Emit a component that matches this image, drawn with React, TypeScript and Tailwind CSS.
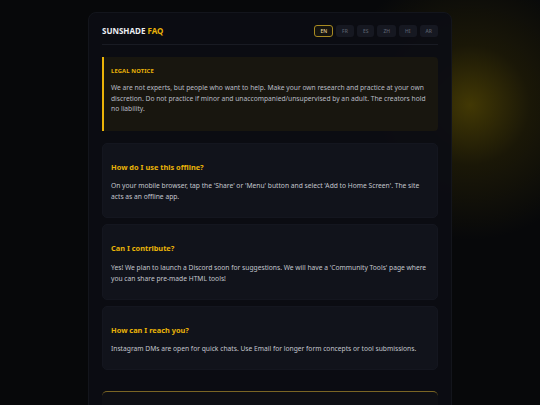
const langs = ["EN", "FR", "ES", "ZH", "HI", "AR"];

const faqs = [
  {
    q: "How do I use this offline?",
    a: "On your mobile browser, tap the 'Share' or 'Menu' button and select 'Add to Home Screen'. The site acts as an offline app.",
  },
  {
    q: "Can I contribute?",
    a: "Yes! We plan to launch a Discord soon for suggestions. We will have a 'Community Tools' page where you can share pre-made HTML tools!",
  },
  {
    q: "How can I reach you?",
    a: "Instagram DMs are open for quick chats. Use Email for longer form concepts or tool submissions.",
  },
];

export default function App() {
  return (
    <div className="h-[405px] overflow-hidden bg-[#07080a] bg-[radial-gradient(circle_at_470px_105px,rgba(105,88,0,0.6),rgba(70,58,0,0.3)_60px,transparent_135px)] pt-[12px] font-['Noto_Sans',sans-serif]">
      <div className="mx-auto w-[364px] rounded-t-[8px] border border-[#13151c] bg-[#0c0d13]/95 px-[13px] pt-[12px] pb-[20px]">
        {/* Header */}
        <div className="flex items-center justify-between border-b border-[#191b23] pb-[7px]">
          <h1 className="text-[8px] font-bold leading-[12px] text-[#eceef2]">
            SUNSHADE <span className="text-[#eab308]">FAQ</span>
          </h1>
          <div className="flex gap-[3px]">
            {langs.map((l) => {
              const active = l === "EN";
              return (
                <button
                  key={l}
                  className={`flex h-[12px] items-center justify-center rounded-[3px] px-[5px] text-[5px] font-medium leading-none ${
                    active
                      ? "border border-[#a88a22] bg-[#15140f] text-[#e8d9a0]"
                      : "border border-transparent bg-[#161821] text-[#5c616d]"
                  }`}
                >
                  {l}
                </button>
              );
            })}
          </div>
        </div>

        {/* Legal notice */}
        <div className="mt-[12px] rounded-r-[4px] border-l-2 border-[#eab308] bg-[#18160f] pt-[10px] pr-[6px] pb-[16px] pl-[7px]">
          <div className="text-[5.85px] font-bold leading-[8px] tracking-[0.02em] text-[#eab308]">
            LEGAL NOTICE
          </div>
          <p className="mt-[8px] text-[6.7px] leading-[10.5px] text-[#b9bcc4]">
            We are not experts, but people who want to help. Make your own research and practice at your
            own discretion. Do not practice if minor and unaccompanied/unsupervised by an adult. The
            creators hold no liability.
          </p>
        </div>

        {/* FAQ cards */}
        <div className="mt-[12px] flex flex-col gap-[6px]">
          {faqs.map((f) => (
            <div
              key={f.q}
              className="rounded-[5px] border border-[#14161f] bg-[#11131b] pt-[18px] pr-[7px] pb-[15px] pl-[8px]"
            >
              <h2 className="text-[7.4px] font-bold leading-[10px] text-[#eab308]">{f.q}</h2>
              <p className="mt-[8.5px] text-[6.7px] leading-[11px] text-[#c3c6cd]">{f.a}</p>
            </div>
          ))}
        </div>

        {/* Bottom box */}
        <div className="mt-[21px] h-[40px] rounded-t-[5px] border-t border-[#7a6524] bg-[#0e0f14]" />
      </div>
    </div>
  );
}
